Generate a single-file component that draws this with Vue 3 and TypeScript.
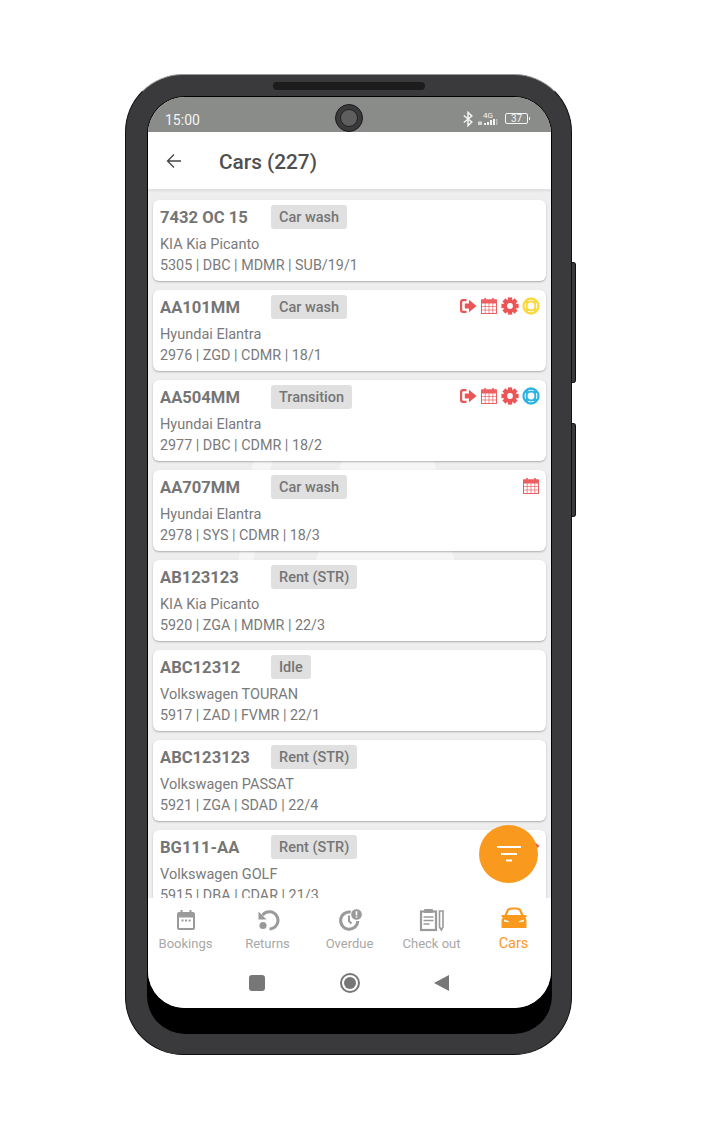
<script setup lang="ts">
type Alert = 'exit' | 'calendar' | 'cog' | 'ringYellow' | 'ringBlue'

interface Car {
  plate: string
  status: string
  model: string
  info: string
  alerts: Alert[]
}

const cars: Car[] = [
  { plate: '7432 OC 15', status: 'Car wash', model: 'KIA Kia Picanto', info: '5305 | DBC | MDMR | SUB/19/1', alerts: [] },
  { plate: 'AA101MM', status: 'Car wash', model: 'Hyundai Elantra', info: '2976 | ZGD | CDMR | 18/1', alerts: ['exit', 'calendar', 'cog', 'ringYellow'] },
  { plate: 'AA504MM', status: 'Transition', model: 'Hyundai Elantra', info: '2977 | DBC | CDMR | 18/2', alerts: ['exit', 'calendar', 'cog', 'ringBlue'] },
  { plate: 'AA707MM', status: 'Car wash', model: 'Hyundai Elantra', info: '2978 | SYS | CDMR | 18/3', alerts: ['calendar'] },
  { plate: 'AB123123', status: 'Rent (STR)', model: 'KIA Kia Picanto', info: '5920 | ZGA | MDMR | 22/3', alerts: [] },
  { plate: 'ABC12312', status: 'Idle', model: 'Volkswagen TOURAN', info: '5917 | ZAD | FVMR | 22/1', alerts: [] },
  { plate: 'ABC123123', status: 'Rent (STR)', model: 'Volkswagen PASSAT', info: '5921 | ZGA | SDAD | 22/4', alerts: [] },
  { plate: 'BG111-AA', status: 'Rent (STR)', model: 'Volkswagen GOLF', info: '5915 | DBA | CDAR | 21/3', alerts: ['exit'] },
]

const tabs = ['Bookings', 'Returns', 'Overdue', 'Check out', 'Cars']
const cogTeeth = [0, 45, 90, 135, 180, 225, 270, 315]
</script>

<template>
  <div class="page">
    <div class="phone">
      <span class="speaker"></span>
      <span class="camera"><span class="lens"></span></span>
      <span class="side side-a"></span>
      <span class="side side-b"></span>

      <div class="well">
        <div class="screen">
          <div class="status">
            <span class="time">15:00</span>
            <div class="status-right">
              <svg class="bt" width="10" height="16" viewBox="0 0 10 16" fill="none" stroke="#f4f4f4" stroke-width="1.5">
                <path d="M.8 4.500 8.800 11 5 14.600V1.400L8.800 5 .8 11.500" />
              </svg>
              <div class="net">
                <span class="net-label">4G</span>
                <svg width="20" height="6" viewBox="0 0 20 6" fill="#f4f4f4">
                  <rect x="0" y="2.500" width="4" height="3.500" opacity=".7" />
                  <rect x="6" y="4" width="2" height="2" />
                  <rect x="9" y="3" width="2" height="3" />
                  <rect x="12" y="1" width="2" height="5" />
                  <rect x="15" y="0" width="2" height="6" />
                  <rect x="18" y="0" width="1.500" height="6" opacity=".4" />
                </svg>
              </div>
              <div class="battery"><span>37</span></div>
            </div>
          </div>

          <header class="bar">
            <svg class="back" width="16" height="16" viewBox="0 0 16 16" fill="none" stroke="#444" stroke-width="1.3">
              <path d="M15 8H1.500M8 1.500 1.500 8 8 14.500" />
            </svg>
            <h1>Cars (227)</h1>
          </header>

          <main class="list">
            <svg class="watermark" width="240" height="110" viewBox="0 0 240 110" fill="#f6f6f6">
              <path d="M23 6H42L22 110H8z" />
              <path d="M113 0H203L225 110H85z" />
            </svg>
            <article v-for="car in cars" :key="car.plate" class="card">
              <div class="top">
                <span class="plate">{{ car.plate }}</span>
                <span class="tag">{{ car.status }}</span>
                <div class="alerts">
                  <template v-for="alert in car.alerts" :key="alert">
                    <svg v-if="alert === 'exit'" width="18" height="18" viewBox="0 0 18 18" fill="#ec5557">
                      <path d="M1 5a3 3 0 0 1 3-3h3.500v2.200H4a.8.8 0 0 0-.8.8v8c0 .4.4.8.8.8h3.500V16H4a3 3 0 0 1-3-3z" />
                      <path d="M10 2.800 17.500 9 10 15.200v-3.600H5.800V6.400H10z" />
                    </svg>
                    <svg v-else-if="alert === 'calendar'" width="18" height="18" viewBox="0 0 18 18" fill="none" stroke="#ec5f61">
                      <rect x="1.500" y="3" width="15" height="13.500" stroke-width="1" />
                      <path d="M1.500 3h15v3h-15z" fill="#ec5f61" stroke-width="1" />
                      <path d="M5 1v3M13 1v3" stroke-width="1.600" />
                      <path d="M1.500 9.500h15M1.500 13h15M5.200 6v10.500M9 6v10.500M12.800 6v10.500" stroke-width=".7" />
                    </svg>
                    <svg v-else-if="alert === 'cog'" width="18" height="18" viewBox="0 0 18 18">
                      <g fill="#ec5557">
                        <rect v-for="deg in cogTeeth" :key="deg" x="6.800" y=".4" width="4.400" height="4" :transform="`rotate(${deg} 9 9)`" />
                      </g>
                      <circle cx="9" cy="9" r="4.700" fill="none" stroke="#ec5557" stroke-width="3.600" />
                    </svg>
                    <svg v-else width="18" height="18" viewBox="0 0 18 18" fill="none" :stroke="alert === 'ringYellow' ? '#fbd83c' : '#2cb5e0'">
                      <circle cx="9" cy="9" r="7.500" stroke-width="2.300" />
                      <circle cx="9" cy="9" r="4.400" stroke-width="2" />
                      <path d="M3.600 3.600 6 6M14.400 3.600 12 6M3.600 14.400 6 12M14.400 14.400 12 12" stroke-width="3.400" />
                    </svg>
                  </template>
                </div>
              </div>
              <p class="model">{{ car.model }}</p>
              <p class="info">{{ car.info }}</p>
            </article>
          </main>

          <button class="fab" type="button" aria-label="Filter">
            <svg width="24" height="16" viewBox="0 0 24 16" fill="#fff">
              <rect x="0" y="0" width="24" height="2" />
              <rect x="4" y="7" width="16" height="2" />
              <rect x="9" y="13.500" width="6" height="2" />
            </svg>
          </button>

          <nav class="tabs">
            <div v-for="(tab, i) in tabs" :key="tab" class="tab" :class="{ active: i === 4 }">
              <svg v-if="i === 0" width="22" height="22" viewBox="0 0 22 22" fill="#9a9a9a">
                <path fill-rule="evenodd" d="M4 3h1.500V1h2v2h7V1h2v2H18a2 2 0 0 1 2 2v14a2 2 0 0 1-2 2H4a2 2 0 0 1-2-2V5a2 2 0 0 1 2-2zm0 5.500V19h14V8.500z" />
                <rect x="6.500" y="10.500" width="2" height="2" />
                <rect x="10" y="10.500" width="2" height="2" />
                <rect x="13.500" y="10.500" width="2" height="2" />
              </svg>
              <svg v-else-if="i === 1" width="24" height="22" viewBox="0 0 24 22" fill="none" stroke="#9a9a9a">
                <path d="M6.500 6.200A8.600 8.600 0 1 1 13.500 20" stroke-width="3" />
                <path d="M2.500 2.500v8H10.500z" fill="#9a9a9a" stroke="none" />
                <circle cx="7" cy="16.500" r="3.600" fill="#9a9a9a" stroke="none" />
              </svg>
              <svg v-else-if="i === 2" width="26" height="22" viewBox="0 0 26 22" fill="none" stroke="#9a9a9a">
                <path d="M14 3.200A8.600 8.600 0 1 0 20.800 12" stroke-width="3" />
                <path d="M12 6.500V12l2.500 2.500" stroke-width="2" />
                <circle cx="19.500" cy="5.500" r="5.800" fill="#9a9a9a" stroke="#fff" stroke-width="1" />
                <path d="M19.500 2.300v4M19.500 7.200v1.300" stroke="#fff" stroke-width="1.600" />
              </svg>
              <svg v-else-if="i === 3" width="26" height="24" viewBox="0 0 26 24" fill="none" stroke="#9a9a9a">
                <rect x="2" y="3.500" width="15" height="18.500" stroke-width="2.200" />
                <rect x="5" y="1" width="9" height="4" rx="1" fill="#9a9a9a" stroke="none" />
                <path d="M4.500 9h10M4.500 12.500h10M4.500 16h6" stroke-width="1.600" />
                <path d="M20.500 3h3.500v16l-1.700 3-1.800-3z" stroke-width="1.600" />
              </svg>
              <svg v-else width="28" height="22" viewBox="0 0 28 22" fill="#f9991d">
                <path fill-rule="evenodd" d="M7 2.500C8 1 10 .5 14 .5s6 .5 7 2L23.500 8H26l1 1.500-2 1c1 1 1.500 2 1.500 3.500v7H1.500v-7c0-1.500.5-2.500 1.500-3.500l-2-1L2 8h2.500zM8.700 3.700 7 8h14l-1.700-4.300C18.500 2.800 17 2.500 14 2.500s-4.500.3-5.300 1.200z" />
                <path d="M4 12.500l5 1.800-.5 1-4.500-.8zM24 12.500l-5 1.800.5 1 4.500-.8z" fill="#fff" />
              </svg>
              <span>{{ tab }}</span>
            </div>
          </nav>

          <div class="system">
            <span class="sys-square"></span>
            <span class="sys-circle"></span>
            <span class="sys-back"></span>
          </div>
        </div>
      </div>
    </div>
  </div>
</template>

<style>
html,
body {
  margin: 0;
  background: #fff;
}
</style>

<style scoped>
.page {
  width: 702px;
  height: 1130px;
  padding: 74px 0 0 125px;
  box-sizing: border-box;
  font-family: Roboto, "Liberation Sans", sans-serif;
  overflow: hidden;
}

.phone {
  position: relative;
  width: 447px;
  height: 981px;
  box-sizing: border-box;
  padding: 21px 19px 20px 21px;
  border: 1px solid #111;
  border-top-color: #999;
  border-radius: 58px;
  background: #3a3a3c;
}

.speaker {
  position: absolute;
  left: 147px;
  top: 7px;
  width: 152px;
  height: 8px;
  border-radius: 4px;
  background: #1c1c1c;
}

.camera {
  position: absolute;
  z-index: 3;
  left: 209px;
  top: 29px;
  width: 28px;
  height: 28px;
  display: flex;
  align-items: center;
  justify-content: center;
  border-radius: 50%;
  background: #3a3a3c;
  border: 1px solid #1a1a1a;
  box-sizing: border-box;
}

.lens {
  width: 16px;
  height: 16px;
  border-radius: 50%;
  background: #5e5e5e;
  border: 1px solid #222;
}

.side {
  position: absolute;
  left: 446px;
  width: 4px;
  background: #3a3a3c;
  border: 1px solid #111;
  border-left: 0;
  border-radius: 0 3px 3px 0;
  box-sizing: border-box;
}

.side-a {
  top: 187px;
  height: 121px;
}

.side-b {
  top: 348px;
  height: 94px;
}

.well {
  height: 938px;
  box-sizing: border-box;
  padding: 1px 1px 0;
  border-radius: 38px;
  background: #000;
  overflow: hidden;
}

.screen {
  position: relative;
  height: 911px;
  display: flex;
  flex-direction: column;
  background: #fff;
  border-radius: 37px;
  overflow: hidden;
}

.status {
  height: 35px;
  flex: none;
  display: flex;
  align-items: center;
  justify-content: space-between;
  padding: 2px 20px 0 17px;
  box-sizing: border-box;
  background: #8a8c8a;
  color: #f4f4f4;
}

.time {
  font-size: 14px;
  margin-top: 9px;
}

.status-right {
  display: flex;
  align-items: center;
  gap: 7px;
  margin-top: 6px;
}

.bt {
  margin-right: -2px;
}

.net {
  display: flex;
  flex-direction: column;
  align-items: center;
  width: 20px;
}

.net-label {
  font-size: 8px;
  line-height: 7px;
}

.battery {
  position: relative;
  width: 23px;
  height: 11px;
  box-sizing: border-box;
  display: flex;
  align-items: center;
  justify-content: center;
  border: 1px solid #f4f4f4;
  border-radius: 2px;
  font-size: 10px;
  margin-right: 3px;
}

.battery::after {
  content: "";
  position: absolute;
  right: -3px;
  top: 3px;
  width: 1px;
  height: 3px;
  background: #f4f4f4;
}

.bar {
  height: 58px;
  flex: none;
  display: flex;
  align-items: center;
  gap: 37px;
  padding: 2px 0 0 18px;
  background: #fff;
  border-bottom: 1px solid #e2e2e2;
  box-sizing: border-box;
  box-shadow: 0 1px 2px rgba(0, 0, 0, 0.08);
  z-index: 1;
}

.back {
  margin-top: -1px;
}

h1 {
  margin: 0;
  font-size: 20.8px;
  font-weight: 500;
  color: #4f4f4f;
}

.list {
  position: relative;
  flex: 1;
  min-height: 0;
  overflow: hidden;
  display: flex;
  flex-direction: column;
  gap: 9px;
  padding: 10px 5px 0;
  background: #eeeeee;
}

.watermark {
  position: absolute;
  left: 82px;
  top: 265px;
}

.card {
  position: relative;
  flex: none;
  height: 81px;
  box-sizing: border-box;
  padding: 5px 7px 0;
  background: #fff;
  border-radius: 6px;
  box-shadow: 0 1px 2px rgba(0, 0, 0, 0.28);
  color: #7a7a7a;
}

.top {
  display: flex;
  align-items: center;
  height: 24px;
}

.plate {
  width: 111px;
  flex: none;
  font-size: 16.6px;
  font-weight: 700;
  color: #757575;
  white-space: nowrap;
}

.tag {
  height: 24px;
  line-height: 26px;
  padding: 0 8px;
  border-radius: 3px;
  background: #e0e0e0;
  font-size: 14.5px;
  font-weight: 500;
  color: #757575;
}

.alerts {
  margin: -2px -1px 0 auto;
  display: flex;
  gap: 3px;
}

.model,
.info {
  margin: 0;
  font-size: 14.5px;
  line-height: 21px;
}

.info {
  font-size: 14.35px;
}

.model {
  margin-top: 5px;
}

.fab {
  position: absolute;
  left: 331px;
  top: 728px;
  width: 59px;
  height: 58px;
  display: flex;
  align-items: center;
  justify-content: center;
  padding: 0;
  border: 0;
  border-radius: 50%;
  background: #f9991d;
  z-index: 2;
}

.tabs {
  height: 65px;
  flex: none;
  display: flex;
  justify-content: center;
  background: #fff;
  z-index: 1;
}

.tab {
  flex: none;
  width: 82px;
  display: flex;
  flex-direction: column;
  align-items: center;
  justify-content: flex-start;
  padding-top: 10px;
  gap: 4px;
  color: #a8a8a8;
  font-size: 13px;
}

.tab svg {
  height: 24px;
}

.tab.active {
  color: #f9991d;
  font-size: 14.5px;
}

.tab.active svg {
  margin: -2px 0 1px;
}

.system {
  height: 45px;
  flex: none;
  display: flex;
  align-items: flex-start;
  justify-content: center;
  gap: 75px;
  padding: 12px 2px 0 0;
  box-sizing: border-box;
  background: #fff;
}

.sys-square {
  width: 16px;
  height: 16px;
  border-radius: 3px;
  background: #777;
}

.sys-circle {
  width: 12px;
  height: 12px;
  margin-top: -2px;
  padding: 2px;
  border: 2px solid #777;
  border-radius: 50%;
  background: #777;
  background-clip: content-box;
}

.sys-back {
  width: 0;
  height: 0;
  margin-left: -1px;
  border-style: solid;
  border-width: 8.500px 15px 8.500px 0;
  border-color: transparent #777 transparent transparent;
}
</style>
